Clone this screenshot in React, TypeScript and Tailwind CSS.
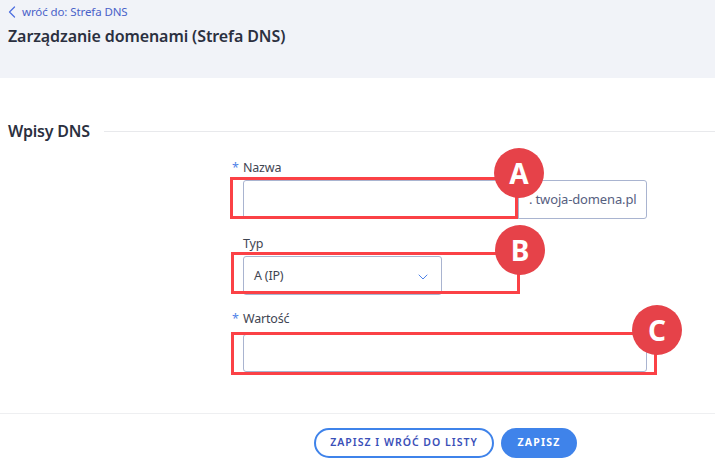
import { ChevronDown, ChevronLeft } from "lucide-react";

const FONT = "font-['Noto_Sans',sans-serif]";

// Red frame and lettered badge laid over the form fields.
function Callout({ letter, box, badge }: { letter: string; box: string; badge: string }) {
  return (
    <>
      <div className={`absolute border-[3px] border-[#fb4146] ${box}`} />
      <div
        className={`absolute flex h-[50px] w-[50px] items-center justify-center rounded-full bg-[#e64249] text-[28px] font-bold text-white ${badge}`}
      >
        {letter}
      </div>
    </>
  );
}

export default function App() {
  return (
    <div className={`relative h-[466px] w-[715px] overflow-hidden bg-white ${FONT}`}>
      <div className="h-[78px] bg-[#f1f3f8] px-2 pt-[3px]">
        <a className="flex h-[17px] items-center text-[11.5px] tracking-[-0.1px] text-[#4a62c9]">
          <ChevronLeft size={20} strokeWidth={1.5} className="-ml-[6px] text-[#4f6fe0]" />
          <span className="ml-[0px]">wróć do: Strefa DNS</span>
        </a>
        <h1 className="mt-[5px] text-[16px] leading-[22px] font-semibold tracking-[-0.1px] text-[#2b3040]">
          Zarządzanie domenami (Strefa DNS)
        </h1>
      </div>

      <div className="mt-[42px] flex items-center pl-2">
        <h2 className="text-[16px] leading-[22px] font-semibold tracking-[-0.2px] text-[#2b3040]">Wpisy DNS</h2>
        <div className="ml-[14px] h-px flex-1 bg-[#e8e9ec]" />
      </div>

      <form className="mt-[17px] ml-[243px] flex w-[404px] flex-col">
        <label className="relative text-[12.5px] leading-[18px] tracking-[-0.2px] text-[#3f4552]">
          <span className="absolute -left-[11px] text-[#4f83e8]">*</span>
          Nazwa
        </label>
        <div className="mt-[3px] flex h-[39px] rounded-[3px] border border-[#a9b4d0]">
          <input className="min-w-0 flex-1 outline-none" />
          <div className="flex w-[128px] items-center border-l border-[#a9b4d0] pl-[10px] text-[13px] tracking-[-0.15px] text-[#56607f]">
            . twoja-domena.pl
          </div>
        </div>

        <label className="mt-[16px] text-[12.5px] leading-[18px] tracking-[-0.2px] text-[#3f4552]">Typ</label>
        <div className="mt-[3px] flex h-[39px] w-[199px] items-center justify-between rounded-[3px] border border-[#a9b4d0] pt-[2px] pr-[10px] pl-[10px] text-[12.5px] tracking-[-0.2px] text-[#3f4552]">
          A (IP)
          <ChevronDown size={16} strokeWidth={1.5} className="text-[#4f83e8]" />
        </div>

        <label className="relative mt-[15px] text-[12.5px] leading-[18px] tracking-[-0.2px] text-[#3f4552]">
          <span className="absolute -left-[11px] text-[#4f83e8]">*</span>
          Wartość
        </label>
        <input className="mt-[6px] h-[38px] rounded-[3px] border border-[#a9b4d0] outline-none" />
      </form>

      <div className="mt-[41px] flex gap-[7px] border-t border-[#eeeff1] pt-[14px] pl-[314px]">
        <button className="flex h-[30px] w-[180px] items-center justify-center rounded-full border-2 border-[#3f83ea] text-[10.5px] font-semibold tracking-[1px] text-[#3a4fb8]">
          ZAPISZ I WRÓĆ DO LISTY
        </button>
        <button className="flex h-[30px] w-[76px] items-center justify-center rounded-full bg-[#3f83ea] text-[10.5px] font-bold tracking-[1.2px] text-white">
          ZAPISZ
        </button>
      </div>

      <Callout letter="A" box="left-[230px] top-[177px] h-[42px] w-[288px]" badge="left-[494px] top-[148px]" />
      <Callout letter="B" box="left-[231px] top-[252px] h-[42px] w-[289px]" badge="left-[495px] top-[225px]" />
      <Callout letter="C" box="left-[231px] top-[332px] h-[43px] w-[426px]" badge="left-[632px] top-[305px]" />
    </div>
  );
}
